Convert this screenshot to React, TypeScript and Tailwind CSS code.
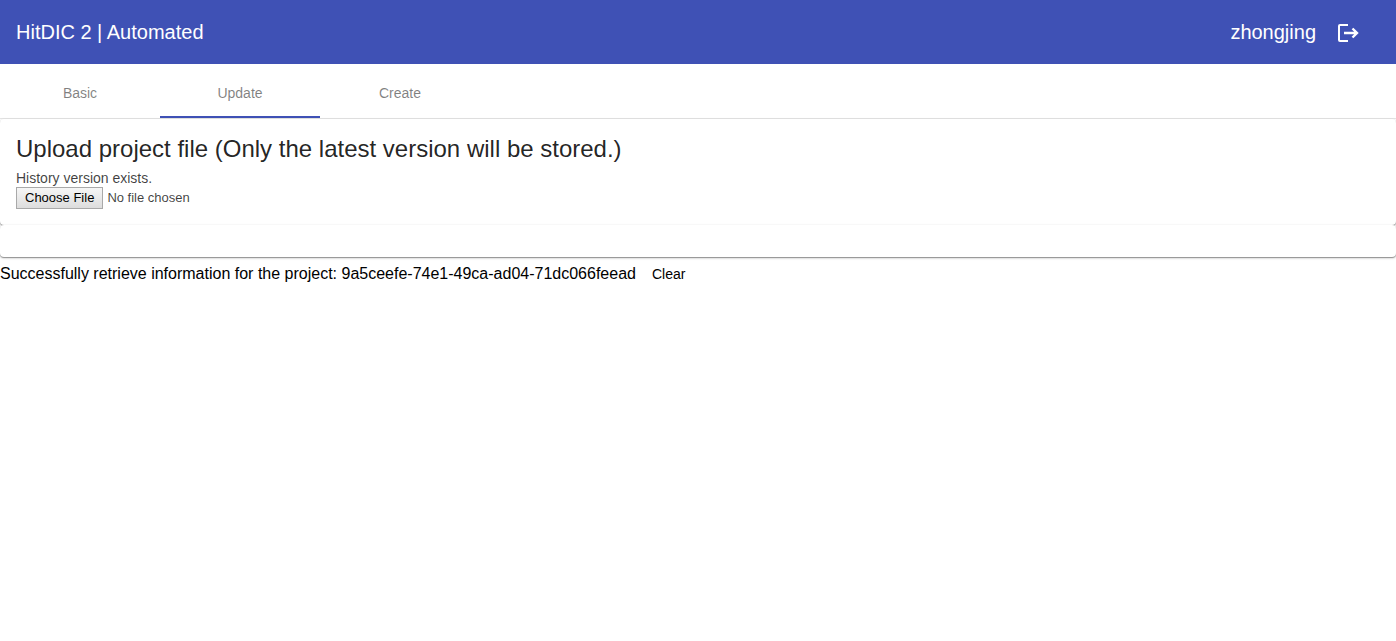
import { useState } from "react";

const tabs = ["Basic", "Update", "Create"];

const cardShadow =
  "rounded bg-white shadow-[0_1px_1px_0_rgba(0,0,0,0.34),0_1px_3px_0_rgba(0,0,0,0.2)]";

function ExitIcon() {
  return (
    <svg className="h-6 w-6" viewBox="0 0 24 24" fill="none" stroke="currentColor" aria-hidden="true">
      <path d="M12 5H4q-1 0-1 1v14q0 1 1 1H12" strokeWidth="2" />
      <path d="M8 13H21M16.500 8.500l4.500 4.500-4.500 4.500" strokeWidth="2.400" />
    </svg>
  );
}

export default function App() {
  const [active, setActive] = useState("Update");
  const [showMessage, setShowMessage] = useState(true);

  return (
    <div className="font-['Liberation_Sans',Arial,sans-serif] text-black/87">
      <header className="flex h-16 items-center justify-between bg-[#3f51b5] pr-9 pl-4 text-white">
        <h1 className="text-xl">HitDIC 2 | Automated</h1>
        <div className="flex items-center gap-5">
          <span className="text-xl">zhongjing</span>
          <button type="button" aria-label="Log out">
            <ExitIcon />
          </button>
        </div>
      </header>

      <nav className="border-b border-black/10 pt-1.5" role="tablist">
        <div className="flex">
          {tabs.map((tab) => (
            <button
              key={tab}
              type="button"
              role="tab"
              aria-selected={active === tab}
              onClick={() => setActive(tab)}
              className={
                active === tab
                  ? "h-12 w-40 border-b-2 border-[#3f51b5] text-sm text-black/50"
                  : "h-12 w-40 border-b-2 border-transparent text-sm text-black/50"
              }
            >
              {tab}
            </button>
          ))}
        </div>
      </nav>

      <main>
        <section className={cardShadow + " p-4"}>
          <h2 className="text-2xl leading-7">
            Upload project file (Only the latest version will be stored.)
          </h2>
          <label htmlFor="project-file" className="mt-1.5 block text-sm leading-[18px] text-black/75">
            History version exists.
          </label>
          <input
            id="project-file"
            type="file"
            className="block h-[22px] text-[13px] text-black/75 file:mr-1 file:h-[22px] file:border file:border-solid file:border-[#a9a9a9] file:bg-linear-to-b file:from-[#f6f6f6] file:to-[#dddddd] file:px-2 file:text-[13px] file:text-black"
          />
        </section>
        <section className={cardShadow + " h-8"} />
        {showMessage && (
          <div className="flex h-[34px] items-center text-base text-black">
            <p role="status">
              Successfully retrieve information for the project:
              9a5ceefe-74e1-49ca-ad04-71dc066feead
            </p>
            <button
              type="button"
              onClick={() => setShowMessage(false)}
              className="h-8 px-4 text-sm"
            >
              Clear
            </button>
          </div>
        )}
      </main>
    </div>
  );
}
